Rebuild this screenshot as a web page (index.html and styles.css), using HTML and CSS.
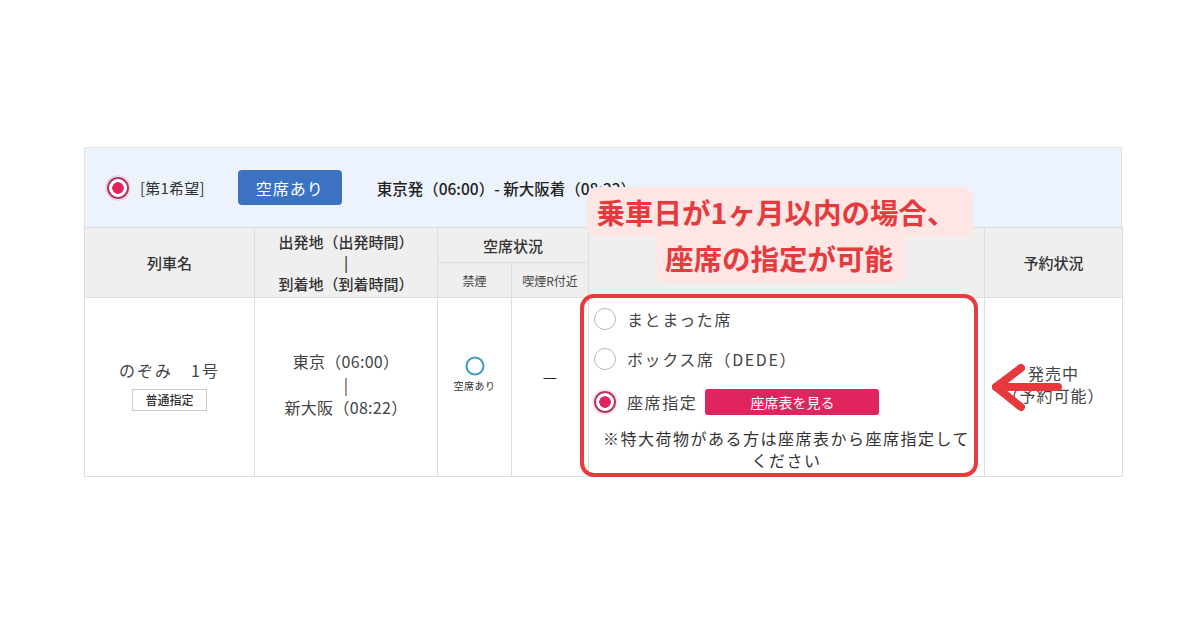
FILE: index.html
```html
<!DOCTYPE html>
<html lang="ja">
<head>
<meta charset="utf-8">
<title>列車選択</title>
<link rel="stylesheet" href="styles.css">
</head>
<body>
<div class="frame">
  <div class="choice">
    <span class="radio radio--on"></span>
    <span class="choice__label">[第1希望]</span>
    <span class="badge">空席あり</span>
    <span class="route">東京発（06:00）- 新大阪着（08:22）</span>
  </div>
  <table class="trains">
    <colgroup>
      <col class="c-name"><col class="c-route"><col class="c-ns"><col class="c-sm"><col class="c-seat"><col class="c-status">
    </colgroup>
    <thead>
      <tr class="h1">
        <th rowspan="2">列車名</th>
        <th rowspan="2" class="th-route">出発地（出発時間）<br>|<br>到着地（到着時間）</th>
        <th colspan="2">空席状況</th>
        <th rowspan="2"></th>
        <th rowspan="2">予約状況</th>
      </tr>
      <tr class="h2">
        <th class="sub">禁煙</th>
        <th class="sub">喫煙R付近</th>
      </tr>
    </thead>
    <tbody>
      <tr class="row">
        <td class="name">
          <div class="train">のぞみ　1号</div>
          <span class="kind">普通指定</span>
        </td>
        <td class="times">東京（06:00）<br>|<br>新大阪（08:22）</td>
        <td class="avail">
          <svg class="avail__icon" width="20" height="20" viewBox="0 0 20 20"><circle cx="10" cy="10" r="8.5" fill="none" stroke="#3b9cc2" stroke-width="2"/></svg>
          <div class="avail__text">空席あり</div>
        </td>
        <td class="dash">—</td>
        <td class="seat">
          <div class="opt"><span class="radio"></span><span class="opt__label">まとまった席</span></div>
          <div class="opt"><span class="radio"></span><span class="opt__label">ボックス席（DEDE）</span></div>
          <div class="opt"><span class="radio radio--on"></span><span class="opt__label">座席指定</span><span class="map-btn">座席表を見る</span></div>
          <p class="note">※特大荷物がある方は座席表から座席指定して<br>ください</p>
        </td>
        <td class="status">発売中<br>（予約可能）</td>
      </tr>
    </tbody>
  </table>

  <div class="callout">
    <span class="callout__line">乗車日が1ヶ月以内の場合、</span>
    <span class="callout__line">座席の指定が可能</span>
  </div>
  <div class="highlight"></div>
  <svg class="arrow" width="76" height="52" viewBox="0 0 76 52">
    <polyline points="31,6 6,25 31,45" fill="none" stroke="#e8383d" stroke-width="8" stroke-linecap="round" stroke-linejoin="round"/>
    <line x1="6" y1="25" x2="68" y2="25" stroke="#e8383d" stroke-width="8" stroke-linecap="round"/>
  </svg>
</div>
</body>
</html>
```

FILE: styles.css
```css
* { box-sizing: border-box; }

html, body {
  margin: 0;
  background: #fff;
}

body {
  font-family: "Noto Sans CJK JP", "Noto Sans", sans-serif;
  color: #333;
}

.frame {
  position: relative;
  width: 1038px;
  margin: 147px 0 0 84px;
}

/* top choice bar */
.choice {
  height: 80px;
  background: #edf3fc;
  border: 1px solid #dfe4ea;
  border-bottom: none;
  display: flex;
  align-items: center;
  padding-left: 22px;
}

.radio {
  flex: none;
  display: inline-block;
  width: 22px;
  height: 22px;
  border-radius: 50%;
  border: 1px solid #b8b8b8;
  background: #fff;
}

.radio--on {
  border: 2px solid #b03767;
  background: radial-gradient(circle, #e0245e 0 5.5px, #fff 6px);
  box-shadow: 0 0 0 2px rgba(224, 36, 94, 0.12);
}

.choice__label {
  margin-left: 11px;
  font-size: 15px;
  letter-spacing: 0.2px;
  color: #333;
}

.badge {
  margin-left: 33px;
  width: 104px;
  height: 35px;
  border-radius: 4px;
  background: #3b73c2;
  color: #fff;
  font-size: 16px;
  letter-spacing: 1px;
  display: flex;
  align-items: center;
  justify-content: center;
}

.route {
  margin-left: 35px;
  font-size: 15.5px;
  font-weight: 500;
  color: #222;
}

/* table */
.trains {
  width: 1038px;
  border-collapse: collapse;
  table-layout: fixed;
}

.c-name { width: 170px; }
.c-route { width: 183px; }
.c-ns { width: 74px; }
.c-sm { width: 77px; }
.c-seat { width: 396px; }
.c-status { width: 138px; }

.trains th,
.trains td {
  border: 1px solid #dedede;
  padding: 0;
  text-align: center;
  vertical-align: middle;
}

.trains th {
  background: #efefef;
  font-size: 15px;
  font-weight: 500;
  color: #333;
}

.h1, .h2 { height: 35px; }

.th-route { line-height: 21px; }

.trains th.sub {
  font-size: 12px;
  font-weight: 400;
  color: #444;
}

.row { height: 179px; }

.trains td {
  font-size: 16px;
  color: #444;
}

.trains td.name { padding-bottom: 5px; }

.train {
  line-height: 22px;
  letter-spacing: 2px;
}

.kind {
  display: inline-block;
  margin-top: 8px;
  height: 22px;
  line-height: 20px;
  padding: 0 12px;
  border: 1px solid #ccc;
  font-size: 12px;
  font-weight: 500;
  color: #333;
}

.trains td.times {
  line-height: 23px;
  letter-spacing: 0.3px;
  padding-bottom: 5px;
}

.trains td.avail { padding-bottom: 25px; }

.avail__icon { display: block; margin: 0 auto; }

.avail__text {
  margin-top: 3px;
  font-size: 10px;
  line-height: 14px;
  color: #333;
  letter-spacing: 0.5px;
}

.trains td.dash {
  padding-bottom: 22px;
  color: #222;
}

.trains td.seat {
  vertical-align: top;
  text-align: left;
  padding: 1px 0 0 5px;
}

.opt {
  display: flex;
  align-items: center;
  height: 40px;
}

.opt:nth-child(3) { height: 46px; }

.opt__label {
  margin-left: 11px;
  letter-spacing: 1.6px;
  color: #444;
}

.map-btn {
  margin-left: 8px;
  width: 174px;
  height: 26px;
  border-radius: 3px;
  background: #e0245e;
  color: #fff;
  font-size: 14px;
  display: flex;
  align-items: center;
  justify-content: center;
}

.note {
  margin: 2px 0 0 -5px;
  text-align: center;
  line-height: 22px;
  letter-spacing: 1.5px;
  color: #333;
}

.trains td.status {
  line-height: 22px;
  letter-spacing: 1px;
  padding-bottom: 6px;
}

/* overlays */
.callout {
  position: absolute;
  left: 500px;
  top: 40px;
  width: 392px;
  display: flex;
  flex-direction: column;
  align-items: center;
  color: #e63b3e;
  font-size: 28.5px;
  font-weight: 700;
}

.callout__line {
  background: #fde6e4;
  border-radius: 10px;
  padding: 4px 12px 4px 10px;
  line-height: 42px;
  white-space: nowrap;
}

.callout__line:first-child { padding-right: 18px; }

.callout__line + .callout__line { margin-top: -4px; }

.highlight {
  position: absolute;
  left: 496px;
  top: 147px;
  width: 398px;
  height: 183px;
  border: 4px solid #e53d3d;
  border-radius: 14px;
}

.arrow {
  position: absolute;
  left: 906px;
  top: 215px;
}
```
